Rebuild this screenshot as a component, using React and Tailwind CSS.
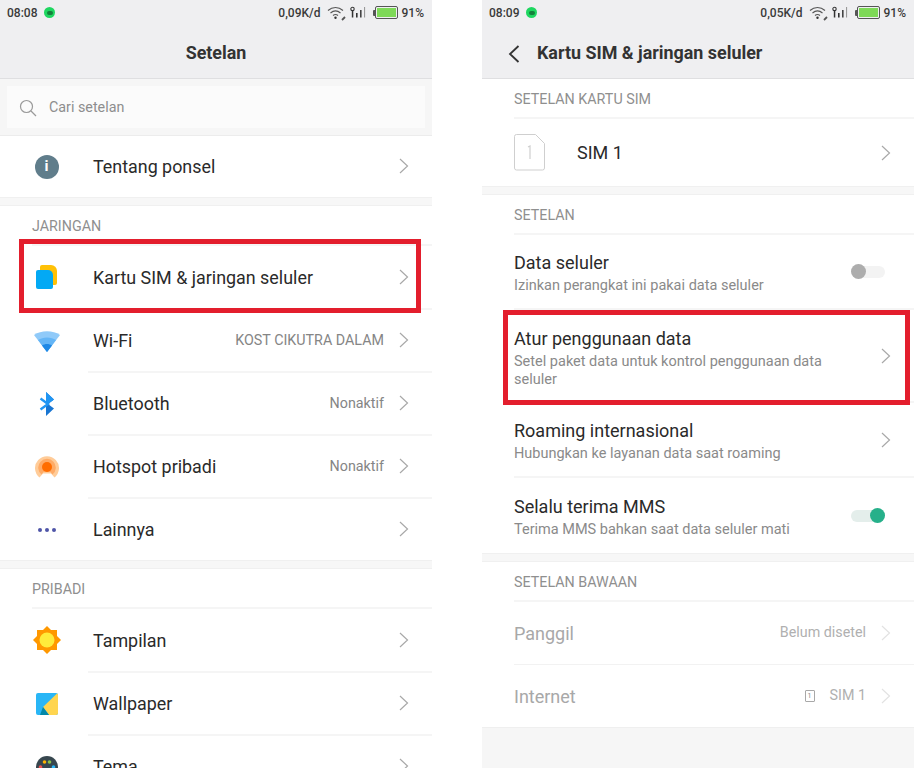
import React from 'react';

const sans = 'font-["Roboto","Liberation_Sans",sans-serif]';

const Chevron = ({ faded }) => (
  <svg width="10" height="16" viewBox="0 0 10 16" fill="none" className="shrink-0">
    <path d="M1 1l7.5 7L1 15" stroke={faded ? '#e2e2e2' : '#a8a8a8'} strokeWidth="1.2" />
  </svg>
);

const StatusBar = ({ time, speed }) => (
  <div className="flex h-[25px] items-center pl-[7px] pr-[8px] text-[12px] font-medium text-[#3a3a3a]">
    <span>{time}</span>
    <span className="ml-[7px] flex h-[11px] w-[11px] items-center justify-center rounded-full bg-[#1ed760]">
      <span className="h-[4px] w-[6px] rounded-[2px] bg-[#14803c]" />
    </span>
    <span className="ml-auto">{speed}</span>
    {/* wifi */}
    <svg width="20" height="16" viewBox="0 0 20 16" fill="none" className="ml-[6px]">
      <path d="M1 5.500c4.500-4 10.500-4 15 0M3.500 8c3-2.500 7-2.500 10 0M6 10.500c1.500-1.200 3.500-1.200 5 0" stroke="#555" strokeWidth="1.100" />
      <circle cx="8.500" cy="12.800" r="1.200" fill="#333" />
      <path d="M15 15l3-3" stroke="#555" strokeWidth="1.800" />
    </svg>
    {/* signal */}
    <svg width="18" height="13" viewBox="0 0 18 13" className="ml-[3px]">
      <circle cx="2.500" cy="3" r="1.700" fill="none" stroke="#333" strokeWidth="1.100" />
      <rect x="1.800" y="4" width="1.500" height="7.500" fill="#333" />
      <rect x="6" y="7" width="1.600" height="4.500" fill="#333" />
      <rect x="10" y="4" width="1.600" height="7.500" fill="#444" />
      <rect x="14" y="1" width="1.100" height="10.500" fill="#999" />
    </svg>
    {/* battery */}
    <div className="ml-[5px] flex items-center">
      <span className="h-[6px] w-[2px] rounded-l-[1px] bg-[#555]" />
      <span className="flex h-[13px] w-[23px] rounded-[2px] border border-[#555] p-[1px]">
        <span className="h-full w-full bg-[#7ed957]" />
      </span>
    </div>
    <span className="ml-[4px]">91%</span>
  </div>
);

const SectionGap = () => <div className="h-[9px] border-y border-[#f0f0f0] bg-[#f7f7f7]" />;

const SectionTitle = ({ children }) => (
  <div className="pl-[32px]">
    <div className="flex h-[40px] items-center border-b-2 border-[#f5f5f5] pt-[4px] text-[14.3px] text-[#8f8f8f]">
      {children}
    </div>
  </div>
);

const IconRow = ({ icon, label, value, height = 'h-[61px]' }) => (
  <div className={`flex ${height} items-center`}>
    <div className="flex w-[93px] shrink-0 justify-center">{icon}</div>
    <div className="flex h-full min-w-0 flex-1 items-center pr-[23px]">
      <span className="pt-[2px] text-[17.9px] text-[#2a2a2a]">{label}</span>
      {value && <span className="ml-auto mr-[15px] pt-[1px] text-[14.3px] text-[#858585]">{value}</span>}
      <span className={value ? '-mt-[1px]' : 'ml-auto -mt-[1px]'}><Chevron /></span>
    </div>
  </div>
);

const Divider = () => <div className="ml-[88px] h-[2px] bg-[#f5f5f5]" />;

const InfoIcon = () => (
  <div className="flex h-[24px] w-[24px] items-center justify-center rounded-full bg-[#607d8b] text-[15px] font-bold leading-none text-white">i</div>
);

const SimIcon = () => (
  <div className="relative h-[24px] w-[21px]">
    <div className="absolute right-0 top-0 h-[20px] w-[17px] rounded-[2px] rounded-tr-[6px] bg-[#ffc107]" />
    <div className="absolute bottom-0 left-0 h-[19px] w-[17px] rounded-[2px] rounded-tr-[5px] bg-[#03a9f4]" />
  </div>
);

const WifiIcon = () => (
  <svg width="26" height="22" viewBox="0 0 26 22">
    <path d="M0 5C7 0 19 0 26 5L13 22z" fill="#90caf9" />
    <path d="M4 10c5-3.500 13-3.500 18 0L13 22z" fill="#64b5f6" />
    <path d="M8 15.500c3-2 7-2 10 0L13 22z" fill="#1e88e5" />
  </svg>
);

const BluetoothIcon = () => (
  <svg width="18" height="26" viewBox="0 0 18 26">
    <path d="M8 1l8 7.500L10 13l6 4.500L8 25z" fill="#1976d2" />
    <path d="M8 1l8 7.500L10 13H8zM8 13h2l-1 1z" fill="#2196f3" />
    <path d="M2.500 7.500L10 13l-7.500 5.500" fill="none" stroke="#2196f3" strokeWidth="2.400" />
  </svg>
);

const HotspotIcon = () => (
  <svg width="24" height="24" viewBox="0 0 24 24">
    <path d="M4.500 22.500a12 12 0 1 1 15 0l-3.500-4H8z" fill="#ffcc99" />
    <path d="M6.500 19.500a8.800 8.800 0 1 1 11 0l-2-2.500h-7z" fill="#ffab66" />
    <circle cx="12" cy="12" r="5" fill="#ff6d00" />
  </svg>
);

const DotsIcon = () => (
  <div className="flex gap-[3px]">
    <span className="h-[4px] w-[4px] rounded-full bg-[#4f55a8]" />
    <span className="h-[4px] w-[4px] rounded-full bg-[#4f55a8]" />
    <span className="h-[4px] w-[4px] rounded-full bg-[#4f55a8]" />
  </div>
);

const SunIcon = () => (
  <svg width="28" height="28" viewBox="0 0 28 28">
    <path d="M14 0l4 4h6v6l4 4-4 4v6h-6l-4 4-4-4H4v-6l-4-4 4-4V4h6z" fill="#ff9800" />
    <circle cx="14" cy="14" r="7.500" fill="#ffeb3b" />
  </svg>
);

const WallpaperIcon = () => (
  <svg width="22" height="22" viewBox="0 0 22 22">
    <rect width="22" height="22" rx="2" fill="#29b6f6" />
    <path d="M22 2v18a2 2 0 0 1-2 2H13l-6-8L21 .5a2 2 0 0 1 1 1.500z" fill="#ffd54f" />
    <path d="M7 14l6 8H4z" fill="#0288a8" />
  </svg>
);

const ThemeIcon = () => (
  <svg width="22" height="22" viewBox="0 0 22 22">
    <circle cx="11" cy="11" r="11" fill="#37474f" />
    <circle cx="4.500" cy="11" r="1.800" fill="#ef5350" />
    <circle cx="8.500" cy="6" r="1.800" fill="#ffb300" />
    <circle cx="13.500" cy="6" r="1.800" fill="#8bc34a" />
    <circle cx="17.500" cy="11" r="1.800" fill="#29b6f6" />
  </svg>
);

const RowText = ({ title, desc }) => (
  <div className="min-w-0 flex-1 pt-[2px]">
    <div className="text-[18px] leading-[26px] text-[#2a2a2a]">{title}</div>
    <div className="mt-[1px] w-[330px] text-[14.5px] leading-[18px] text-[#8a8a8a]">{desc}</div>
  </div>
);

const Toggle = ({ on }) => (
  <div className={`flex h-[12px] w-[34px] items-center rounded-full ${on ? 'justify-end bg-[#e4eeeb]' : 'bg-[#f3f3f3]'}`}>
    <span className={`h-[15px] w-[15px] rounded-full ${on ? 'bg-[#26b08a]' : 'bg-[#adadad]'}`} />
  </div>
);

const TextRow = ({ height, title, desc, toggle, border = true }) => (
  <div className="pl-[32px]">
    <div className={`flex ${height} items-center ${toggle !== undefined ? 'pr-[29px]' : 'pr-[23px]'} ${border ? 'border-b-2 border-[#f5f5f5]' : ''}`}>
      <RowText title={title} desc={desc} />
      {toggle !== undefined ? <Toggle on={toggle} /> : <Chevron />}
    </div>
  </div>
);

const DisabledRow = ({ label, value, sim, height = 'h-[63px]', border = true }) => (
  <div className="pl-[32px]">
    <div className={`flex ${height} items-center pr-[23px] ${border ? 'border-b border-[#f2f2f2]' : ''}`}>
      <span className="text-[18px] text-[#a8a8a8]">{label}</span>
      <span className="ml-auto mr-[15px] flex items-center text-[14.3px] text-[#b0b0b0]">
        {sim && (
          <span className="mr-[15px] flex h-[12px] w-[10px] items-center justify-center rounded-[1px] border border-[#a8a8a8] text-[7px] leading-none text-[#888]">1</span>
        )}
        {value}
      </span>
      <Chevron faded />
    </div>
  </div>
);

const SettingsList = () => (
  <div className={`relative h-[768px] w-[432px] shrink-0 overflow-hidden bg-white ${sans}`}>
    <div className="h-[79px] border-b border-[#dfdfe1] bg-[#efeff1]">
      <StatusBar time="08:08" speed="0,09K/d" />
      <div className="flex h-[53px] items-center justify-center pt-[4px] text-[17.9px] font-bold text-[#333]">Setelan</div>
    </div>
    <div className="border-b border-[#ececec] bg-[#f6f6f6] p-[7px]">
      <div className="flex h-[42px] items-center bg-[#fbfbfb] pl-[12px] pt-[1px] text-[14.3px] text-[#8e8e8e]">
        <svg width="18" height="18" viewBox="0 0 18 18" fill="none">
          <circle cx="7.500" cy="7.500" r="6" stroke="#9a9a9a" strokeWidth="1.200" />
          <path d="M12 12l5 5" stroke="#9a9a9a" strokeWidth="1.200" />
        </svg>
        <span className="ml-[12px] pt-[1px]">Cari setelan</span>
      </div>
    </div>
    <IconRow icon={<InfoIcon />} label="Tentang ponsel" />
    <SectionGap />
    <SectionTitle>JARINGAN</SectionTitle>
    <IconRow icon={<SimIcon />} label="Kartu SIM & jaringan seluler" height="h-[62px]" />
    <Divider />
    <IconRow icon={<WifiIcon />} label="Wi-Fi" value="KOST CIKUTRA DALAM" />
    <Divider />
    <IconRow icon={<BluetoothIcon />} label="Bluetooth" value="Nonaktif" />
    <Divider />
    <IconRow icon={<HotspotIcon />} label="Hotspot pribadi" value="Nonaktif" />
    <Divider />
    <IconRow icon={<DotsIcon />} label="Lainnya" />
    <SectionGap />
    <SectionTitle>PRIBADI</SectionTitle>
    <IconRow icon={<SunIcon />} label="Tampilan" height="h-[62px]" />
    <Divider />
    <IconRow icon={<WallpaperIcon />} label="Wallpaper" />
    <Divider />
    <IconRow icon={<ThemeIcon />} label="Tema" />
    <div className="absolute left-[19px] top-[239px] h-[74px] w-[402px] border-[5px] border-[#e31e2d]" />
  </div>
);

const SimNetwork = () => (
  <div className={`relative h-[768px] w-[432px] shrink-0 overflow-hidden bg-[#f6f6f6] ${sans}`}>
    <div className="h-[79px] border-b border-[#dfdfe1] bg-[#efeff1]">
      <StatusBar time="08:09" speed="0,05K/d" />
      <div className="flex h-[53px] items-center pl-[26px] pt-[4px] text-[17.9px] font-bold text-[#333]">
        <svg width="12" height="18" viewBox="0 0 12 18" fill="none">
          <path d="M10.500 1L2 9l8.500 8" stroke="#333" strokeWidth="1.800" />
        </svg>
        <span className="ml-[17px]">Kartu SIM &amp; jaringan seluler</span>
      </div>
    </div>
    <div className="bg-white">
      <SectionTitle>SETELAN KARTU SIM</SectionTitle>
      <div className="flex h-[67px] items-center pl-[32px] pr-[23px]">
        <svg width="32" height="37" viewBox="0 0 32 37" fill="none">
          <path d="M2.500.5h19l9 9V34a2 2 0 0 1-2 2h-26a2 2 0 0 1-2-2V2.500a2 2 0 0 1 2-2z" stroke="#cfcfcf" />
          <path d="M14 13l2-1v13" stroke="#cfcfcf" strokeWidth="1.200" />
        </svg>
        <span className="ml-[31px] text-[18px] text-[#2a2a2a]">SIM 1</span>
        <span className="ml-auto"><Chevron /></span>
      </div>
    </div>
    <SectionGap />
    <div className="bg-white">
      <SectionTitle>SETELAN</SectionTitle>
      <TextRow height="h-[75px]" title="Data seluler" desc="Izinkan perangkat ini pakai data seluler" toggle={false} />
      <TextRow height="h-[93px] pt-[1px]" title="Atur penggunaan data" desc="Setel paket data untuk kontrol penggunaan data seluler" />
      <TextRow height="h-[75px]" title="Roaming internasional" desc="Hubungkan ke layanan data saat roaming" />
      <TextRow height="h-[75px]" title="Selalu terima MMS" desc="Terima MMS bahkan saat data seluler mati" toggle border={false} />
    </div>
    <SectionGap />
    <div className="border-b border-[#efefef] bg-white">
      <SectionTitle>SETELAN BAWAAN</SectionTitle>
      <DisabledRow label="Panggil" value="Belum disetel" />
      <DisabledRow label="Internet" value="SIM 1" sim height="h-[62px]" border={false} />
    </div>
    <div className="absolute left-[21px] top-[310px] h-[95px] w-[407px] border-[5px] border-[#e31e2d]" />
  </div>
);

export default function App() {
  return (
    <div className="flex h-[768px] w-[914px] justify-between overflow-hidden bg-white">
      <SettingsList />
      <SimNetwork />
    </div>
  );
}
